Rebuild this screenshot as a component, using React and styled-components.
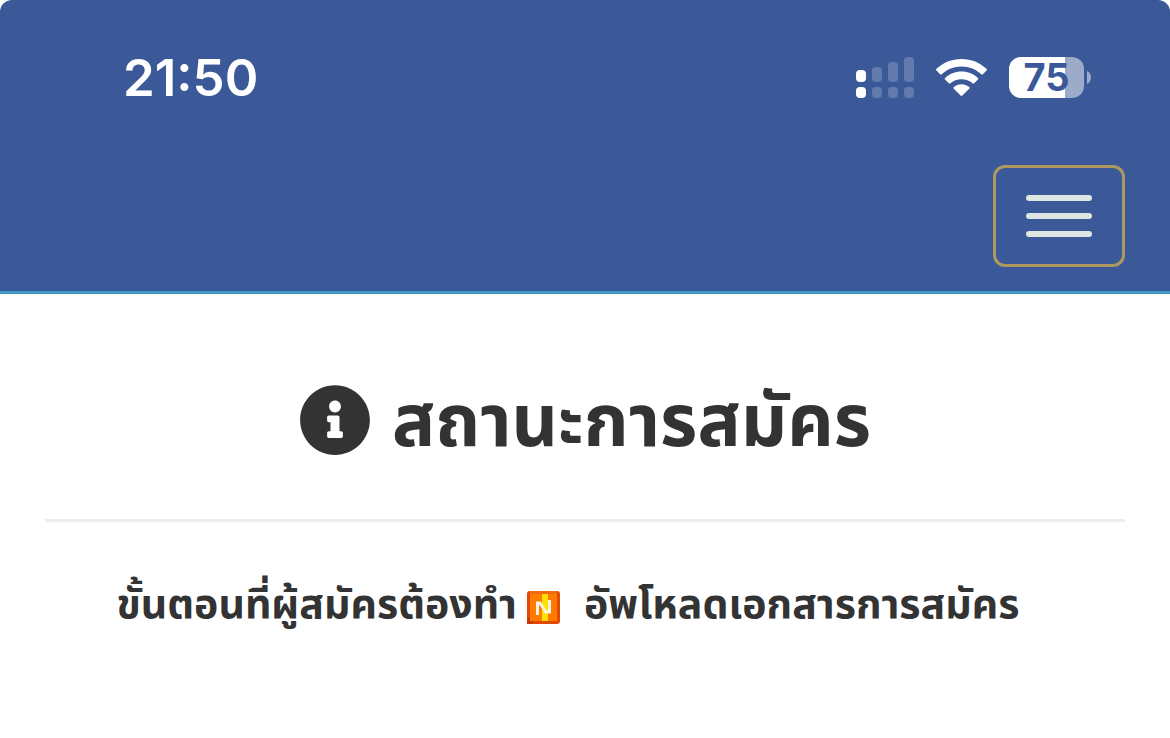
import React from "react";
import styled, { createGlobalStyle } from "styled-components";
import { FaInfoCircle } from "react-icons/fa";

const GlobalStyle = createGlobalStyle`
  * {
    box-sizing: border-box;
  }
  body {
    margin: 0;
    background-color: #fff;
    color: #333;
    font-family: "Noto Sans Thai", "Noto Sans", "Open Sans", sans-serif;
  }
`;

const Header = styled.header`
  background-color: #3b5998;
  border-bottom: 3px solid #4197c3;
  border-radius: 12px 12px 0 0;
`;

const StatusBar = styled.div`
  display: flex;
  align-items: center;
  justify-content: space-between;
  height: 141px;
  padding: 14px 79px 0 123px;
  font-family: Inter, sans-serif;
`;

const Time = styled.time`
  color: #fff;
  font-size: 51px;
  font-weight: 600;
  line-height: 60px;
`;

const StatusIcons = styled.div`
  display: flex;
  align-items: center;
  gap: 22px;
`;

const BatteryBox = styled.div`
  display: flex;
  align-items: center;
  gap: 3px;
`;

const BatteryLevel = styled.div`
  display: flex;
  align-items: center;
  justify-content: center;
  width: 75px;
  height: 41px;
  border-radius: 12px;
  background: linear-gradient(to right, #fff 75%, #9dabcb 75%);
  color: #3b5998;
  font-size: 38px;
  font-weight: 700;
  line-height: 41px;
`;

const Navbar = styled.nav`
  display: flex;
  justify-content: flex-end;
  padding: 24px 45px;
`;

const Toggler = styled.button`
  display: flex;
  flex-direction: column;
  align-items: center;
  justify-content: center;
  gap: 12px;
  width: 132px;
  height: 102px;
  padding: 0;
  border: 3px solid #ad985f;
  border-radius: 12px;
  background: transparent;
  cursor: pointer;
`;

const TogglerBar = styled.span`
  width: 66px;
  height: 6px;
  border-radius: 3px;
  background-color: #dde8e2;
`;

const Main = styled.main`
  padding: 76px 45px;
  text-align: center;
`;

const Title = styled.h1`
  display: flex;
  align-items: center;
  justify-content: center;
  gap: 21px;
  margin: 0;
  padding-bottom: 41px;
  border-bottom: 3px solid #eee;
  font-size: 72px;
  font-weight: 700;
  line-height: 108px;
`;

const InfoIcon = styled(FaInfoCircle)`
  margin-bottom: 8px;
`;

const Step = styled.h2`
  display: flex;
  align-items: center;
  justify-content: center;
  margin: 50px 0 0;
  padding-right: 34px;
  font-size: 41px;
  font-weight: 700;
  line-height: 66px;
`;

const NewIcon = styled.svg`
  width: 33px;
  height: 33px;
  margin: 4px 24px 0 10px;
`;

const Signal = () => (
  <svg width="58" height="41" viewBox="0 0 58 41" fill="#fff">
    <rect x="0" y="13" width="10" height="12" rx="4" />
    <rect x="0" y="30" width="10" height="11" rx="4" />
    <g opacity="0.2">
      <rect x="16" y="10" width="10" height="15" rx="4" />
      <rect x="32" y="5" width="10" height="20" rx="4" />
      <rect x="48" y="0" width="10" height="25" rx="4" />
      <rect x="16" y="30" width="10" height="11" rx="4" />
      <rect x="32" y="30" width="10" height="11" rx="4" />
      <rect x="48" y="30" width="10" height="11" rx="4" />
    </g>
  </svg>
);

const Wifi = () => (
  <svg width="51" height="37" viewBox="0 0 51 37" fill="#fff">
    <path d="M25.5 0C35.2 0 44 3.7 50.5 9.8C51.1 10.4 51.1 11 50.5 11.6L46.9 15.2C46.4 15.7 45.8 15.7 45.2 15.2C40 10.4 33.1 7.6 25.5 7.6C17.9 7.6 11 10.4 5.8 15.2C5.2 15.7 4.600 15.7 4.100 15.2L0.5 11.6C-0.1 11 -0.1 10.4 0.5 9.8C7 3.7 15.8 0 25.5 0Z" />
    <path d="M25.5 12.6C31.9 12.6 37.6 15 41.9 18.9C42.5 19.5 42.5 20 41.9 20.6L38.2 24.3C37.7 24.8 37.1 24.8 36.5 24.3C33.6 21.7 29.7 20.2 25.5 20.2C21.3 20.2 17.4 21.7 14.5 24.3C13.9 24.8 13.3 24.8 12.8 24.3L9.1 20.6C8.5 20 8.5 19.5 9.1 18.9C13.4 15 19.1 12.6 25.5 12.6Z" />
    <path d="M25.5 25.2C28.5 25.2 31.2 26.3 33.2 28.1C33.8 28.7 33.8 29.2 33.2 29.8L26.4 36.5C25.8 37.1 25.2 37.1 24.6 36.5L17.8 29.8C17.2 29.2 17.2 28.7 17.8 28.1C19.8 26.3 22.5 25.2 25.5 25.2Z" />
  </svg>
);

const Battery = () => (
  <BatteryBox>
    <BatteryLevel>75</BatteryLevel>
    <svg width="4" height="13" viewBox="0 0 4 13" fill="#9dabcb">
      <path d="M0 0C2.5 1 4 3.6 4 6.5C4 9.4 2.5 12 0 13Z" />
    </svg>
  </BatteryBox>
);

const NewBadge = () => (
  <NewIcon viewBox="0 0 33 33" aria-hidden="true">
    <rect width="33" height="33" rx="3" fill="#e24a04" />
    <rect x="3" y="3" width="27" height="27" fill="#ff7b00" />
    <path d="M3 1.500H30" stroke="#ef6a10" strokeWidth="3" />
    <path d="M0 27H3V30H6V33H0Z" fill="#c93a05" />
    <rect x="15" y="3" width="6" height="27" fill="#ffe000" />
    <path
      d="M10.500 24V12H13L19 21H22.500V9"
      fill="none"
      stroke="#fff3e4"
      strokeWidth="3"
    />
  </NewIcon>
);

const App = () => {
  return (
    <>
      <GlobalStyle />
      <Header>
        <StatusBar>
          <Time>21:50</Time>
          <StatusIcons>
            <Signal />
            <Wifi />
            <Battery />
          </StatusIcons>
        </StatusBar>
        <Navbar>
          <Toggler type="button" aria-label="เมนู">
            <TogglerBar />
            <TogglerBar />
            <TogglerBar />
          </Toggler>
        </Navbar>
      </Header>
      <Main>
        <Title>
          <InfoIcon />
          สถานะการสมัคร
        </Title>
        <Step>
          ขั้นตอนที่ผู้สมัครต้องทำ
          <NewBadge />
          อัพโหลดเอกสารการสมัคร
        </Step>
      </Main>
    </>
  );
};

export default App;
